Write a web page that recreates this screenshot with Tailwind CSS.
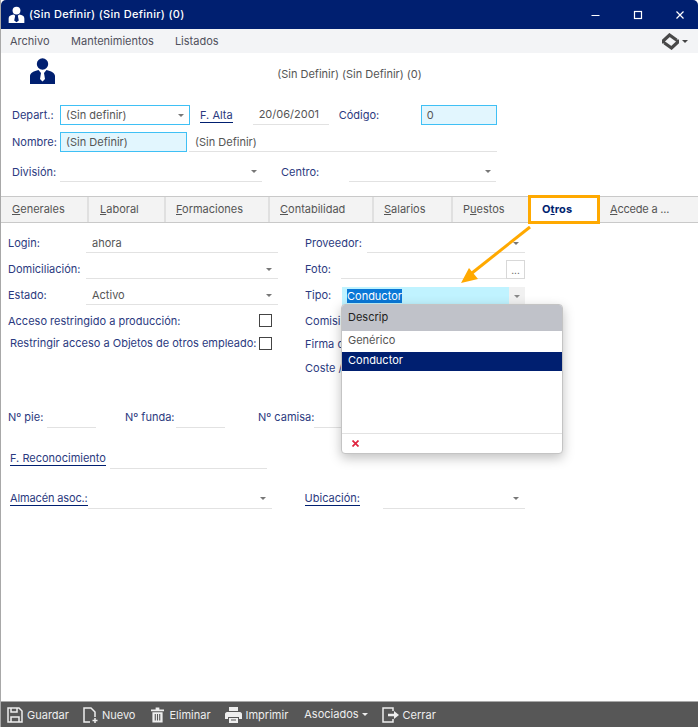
<!DOCTYPE html>
<html lang="es">
  <head>
    <meta charset="UTF-8" />
    <title>(Sin Definir) (Sin Definir) (0)</title>
    <script src="https://cdn.jsdelivr.net/npm/@tailwindcss/browser@4"></script>
  </head>
  <body class="bg-white">
    <div class="relative w-[698px] h-[727px] overflow-hidden bg-white border-l border-[#a8a8a8] font-['Inter','Liberation_Sans',sans-serif] text-[11px] text-[#555] flex flex-col">
      <!-- Barra de titulo -->
      <div class="h-[29px] shrink-0 bg-[#001f70] rounded-tl-[5px] rounded-tr-[5px] flex items-center text-white">
        <svg class="ml-[7px] w-[17px] h-[17px]" viewBox="0 0 26 26" fill="#fff">
          <circle cx="13" cy="7" r="6" />
          <path d="M1 26v-7c0-4 3-5 8-6l2 2-1.500 7 3.500 3 3.500-3-1.500-7 2-2c5 1 8 2 8 6v7z" />
        </svg>
        <span class="ml-[4px] font-medium tracking-[0.3px]">(Sin Definir) (Sin Definir) (0)</span>
        <svg class="ml-auto mr-[7px] w-[100px] h-[12px]" viewBox="0 0 100 12" fill="none" stroke="#fff" stroke-width="1">
          <path d="M0.500 6.500h8" />
          <rect x="43.500" y="2.500" width="7" height="7" stroke-width="1.200" />
          <path d="M85.500 2.500l7 7M92.500 2.500l-7 7" stroke-width="1.200" />
        </svg>
      </div>

      <!-- Menu -->
      <div class="h-[24px] shrink-0 bg-[#f3f4f6] flex items-center pl-[9px] text-[#50505c]">
        <span class="mr-[21.500px]">Archivo</span>
        <span class="mr-[21px]">Mantenimientos</span>
        <span>Listados</span>
        <div class="ml-auto mr-[10px] flex items-center gap-[3px]">
          <svg class="w-[17px] h-[17px]" viewBox="0 0 17 17" fill="none" stroke="#484848" stroke-width="3.200">
            <path d="M1.600 10.500V7.500L7.500 2 14.500 7" />
            <path d="M15.400 6.500v3L9.500 15 2.500 10" />
          </svg>
          <span class="w-0 h-0 border-x-[3px] border-x-transparent border-t-[3px] border-t-[#444]"></span>
        </div>
      </div>

      <!-- Cabecera -->
      <div class="h-[52px] shrink-0 relative flex justify-center pt-[13px]">
        <svg class="absolute left-[28px] top-[5px] w-[27px] h-[26px]" viewBox="0 0 27 26" fill="#001f70">
          <circle cx="13.500" cy="6" r="5.700" />
          <path d="M1 26v-8c0-3 4-5 8.500-6l2.500 3-1 6 2.500 2.500L16 21l-1-6 2.500-3c4.500 1 8.500 3 8.500 6v8z" />
        </svg>
        <span>(Sin Definir) (Sin Definir) (0)</span>
      </div>

      <!-- Datos generales -->
      <div class="h-[91px] shrink-0 pl-[11px]">
        <div class="h-[20px] flex items-center">
          <span class="w-[48px] text-[#2b3a80]">Depart.:</span>
          <div class="w-[130px] h-[20px] border border-[#3fc0f5] flex items-center pl-[5px] pr-[5px]">
            <span>(Sin definir)</span>
            <span class="ml-auto w-0 h-0 border-x-[3px] border-x-transparent border-t-[3px] border-t-[#777]"></span>
          </div>
          <span class="ml-[10px] text-[#2b3a80] border-b border-[#001f70] leading-[14px]">F. Alta</span>
          <div class="ml-[20px] w-[76px] h-[20px] border-b border-[#e2e2e2] flex items-center pl-[6px]">20/06/2001</div>
          <span class="ml-[10px] w-[82px] text-[#2b3a80]">Código:</span>
          <div class="w-[76px] h-[20px] border border-[#3fc0f5] bg-[#e2f6fe] flex items-center pl-[5px]">0</div>
        </div>
        <div class="h-[20px] mt-[7px] flex items-center">
          <span class="w-[48px] text-[#2b3a80]">Nombre:</span>
          <div class="w-[127px] h-[20px] border border-[#3fc0f5] bg-[#e2f6fe] flex items-center pl-[5px]">(Sin Definir)</div>
          <div class="ml-[2px] w-[308px] h-[20px] border-b border-[#e2e2e2] flex items-center pl-[6px] pt-[2px]">(Sin Definir)</div>
        </div>
        <div class="h-[20px] mt-[10px] flex items-center">
          <span class="w-[48px] text-[#2b3a80]">División:</span>
          <div class="w-[202px] h-[20px] border-b border-[#e2e2e2] flex items-center pr-[5px]">
            <span class="ml-auto w-0 h-0 border-x-[3px] border-x-transparent border-t-[3px] border-t-[#777]"></span>
          </div>
          <span class="ml-[19px] w-[68px] text-[#2b3a80]">Centro:</span>
          <div class="w-[147px] h-[20px] border-b border-[#e2e2e2] flex items-center pr-[5px]">
            <span class="ml-auto w-0 h-0 border-x-[3px] border-x-transparent border-t-[3px] border-t-[#777]"></span>
          </div>
        </div>
      </div>

      <!-- Pestanas -->
      <div class="h-[27px] shrink-0 flex border-y border-[#c9c9c9] bg-[#f3f3f3] text-[#555]">
        <div class="w-[88px] border-r-2 border-[#e0e0e0] pl-[11px] leading-[25px]"><u>G</u>enerales</div>
        <div class="w-[77px] border-r-2 border-[#e0e0e0] pl-[11px] leading-[25px]"><u>L</u>aboral</div>
        <div class="w-[104px] border-r-2 border-[#e0e0e0] pl-[10px] leading-[25px]"><u>F</u>ormaciones</div>
        <div class="w-[104px] border-r-2 border-[#e0e0e0] pl-[10px] leading-[25px]"><u>C</u>ontabilidad</div>
        <div class="w-[79px] border-r-2 border-[#e0e0e0] pl-[10px] leading-[25px]"><u>S</u>alarios</div>
        <div class="w-[75px] pl-[10px] leading-[25px]">P<u>u</u>estos</div>
        <div class="relative w-[72px] h-[29px] -mt-[2px] bg-white border-[3px] border-[#ffa900] pl-[11px] leading-[23px] font-bold tracking-[0.1px] text-[#001f70]">O<u>t</u>ros</div>
        <div class="pl-[10px] leading-[25px] tracking-[-0.2px]"><u>A</u>ccede a ...</div>
      </div>

      <!-- Contenido Otros -->
      <div class="flex-1 flex flex-col pl-[7px] pt-[8px]">
        <div class="flex">
          <div class="w-[297px] shrink-0">
            <div class="h-[26px] w-[270px] flex items-start">
              <span class="w-[78px] h-[21px] leading-[25px] text-[#2b3a80]">Login:</span>
              <div class="flex-1 h-[22px] border-b border-[#e2e2e2] pl-[6px] leading-[25px]">ahora</div>
            </div>
            <div class="h-[26px] w-[270px] flex items-start">
              <span class="w-[78px] leading-[25px] text-[#2b3a80]">Domiciliación:</span>
              <div class="flex-1 h-[22px] border-b border-[#e2e2e2] flex items-center pr-[6px]">
                <span class="ml-auto mt-[3px] w-0 h-0 border-x-[3px] border-x-transparent border-t-[3px] border-t-[#777]"></span>
              </div>
            </div>
            <div class="h-[26px] w-[270px] flex items-start">
              <span class="w-[78px] leading-[25px] text-[#2b3a80]">Estado:</span>
              <div class="flex-1 h-[22px] border-b border-[#e2e2e2] flex items-center pl-[6px] pr-[6px]">
                <span class="mt-[3px]">Activo</span>
                <span class="ml-auto mt-[3px] w-0 h-0 border-x-[3px] border-x-transparent border-t-[3px] border-t-[#777]"></span>
              </div>
            </div>
            <div class="h-[23px] w-[264px] flex items-center">
              <span class="mt-[2px] text-[#2b3a80]">Acceso restringido a producción:</span>
              <span class="ml-auto w-[13px] h-[13px] border border-[#444]"></span>
            </div>
            <div class="h-[23px] w-[264px] flex items-center pl-[2px]">
              <span class="w-[247px] overflow-hidden whitespace-nowrap text-[#2b3a80]">Restringir acceso a Objetos de otros empleado:</span>
              <span class="ml-auto w-[13px] h-[13px] border border-[#444]"></span>
            </div>
          </div>
          <div class="w-[220px]">
            <div class="h-[26px] flex items-start">
              <span class="w-[62px] leading-[25px] text-[#2b3a80]">Proveedor:</span>
              <div class="flex-1 h-[22px] border-b border-[#e2e2e2] flex items-center pr-[6px]">
                <span class="ml-auto mt-[3px] w-0 h-0 border-x-[3px] border-x-transparent border-t-[3px] border-t-[#777]"></span>
              </div>
            </div>
            <div class="h-[26px] flex items-start">
              <span class="w-[36px] leading-[25px] text-[#2b3a80]">Foto:</span>
              <div class="w-[165px] h-[22px] border-b border-[#e2e2e2]"></div>
              <div class="w-[19px] h-[19px] mt-[3px] border border-[#d8d8d8] flex items-center justify-center text-[10px] leading-none">...</div>
            </div>
            <div class="h-[26px] flex items-start">
              <span class="w-[37px] leading-[25px] text-[#2b3a80]">Tipo:</span>
              <div class="flex-1 mt-[4px] h-[18px] bg-[#c0f3ff] flex items-center pl-[5px]">
                <span class="bg-[#0a78d7] text-white leading-[14px]">Conductor</span>
                <span class="ml-auto w-[16px] h-[18px] bg-[#f1f1f1] flex items-center justify-center">
                  <span class="w-0 h-0 border-x-[3px] border-x-transparent border-t-[3px] border-t-[#888]"></span>
                </span>
              </div>
            </div>
            <div class="h-[24px] flex items-center text-[#2b3a80]">Comisi</div>
            <div class="h-[23px] flex items-center text-[#2b3a80]">Firma d</div>
            <div class="h-[25px] flex items-center text-[#2b3a80]">Coste /</div>
          </div>
        </div>

        <div class="mt-[25px] h-[22px] flex items-center text-[#2b3a80] whitespace-nowrap">
          <span class="w-[39px]">Nº pie:</span>
          <div class="w-[49px] h-[22px] border-b border-[#e2e2e2]"></div>
          <span class="ml-[29px] w-[51px]">Nº funda:</span>
          <div class="w-[49px] h-[22px] border-b border-[#e2e2e2]"></div>
          <span class="ml-[33px] w-[56px]">Nº camisa:</span>
          <div class="w-[40px] h-[22px] border-b border-[#e2e2e2]"></div>
        </div>

        <div class="mt-[18px] h-[23px] flex items-center pl-[2px]">
          <span class="mt-[2px] text-[#2b3a80] border-b border-[#001f70] leading-[14px]">F. Reconocimiento</span>
          <div class="ml-[4px] w-[157px] h-[23px] border-b border-[#e2e2e2]"></div>
        </div>

        <div class="mt-[17px] h-[23px] flex items-center">
          <span class="ml-[2px] mt-[2px] tracking-[-0.14px] text-[#2b3a80] border-b border-[#001f70] leading-[14px]">Almacén asoc.:</span>
          <div class="w-[184px] h-[23px] border-b border-[#e2e2e2] flex items-center pr-[6px]">
            <span class="ml-auto mt-[3px] w-0 h-0 border-x-[3px] border-x-transparent border-t-[3px] border-t-[#777]"></span>
          </div>
          <span class="ml-[33px] mt-[2px] text-[#2b3a80] border-b border-[#001f70] leading-[14px]">Ubicación:</span>
          <div class="ml-[23px] w-[142px] h-[23px] border-b border-[#e2e2e2] flex items-center pr-[6px]">
            <span class="ml-auto mt-[3px] w-0 h-0 border-x-[3px] border-x-transparent border-t-[3px] border-t-[#777]"></span>
          </div>
        </div>
      </div>

      <!-- Barra inferior -->
      <div class="h-[26px] shrink-0 bg-[#575757] border-t border-[#a9a9a9] flex items-center text-[#eee] pl-[6px]">
        <svg class="w-[16px] h-[16px]" viewBox="0 0 16 16" fill="none" stroke="#eee" stroke-width="1.500">
          <path d="M1 1h11l3 3v11H1z" />
          <path d="M4 1v4h6V1M4 15v-5h8v5" />
        </svg>
        <span class="ml-[4px] mt-[2px]">Guardar</span>
        <svg class="ml-[13px] w-[16px] h-[16px]" viewBox="0 0 16 16" fill="none" stroke="#eee" stroke-width="1.500">
          <path d="M8 15H2V1h7l4 4v5" />
          <path d="M13 11v5M10.500 13.500h5" />
        </svg>
        <span class="ml-[4px] mt-[2px]">Nuevo</span>
        <svg class="ml-[16px] w-[13px] h-[16px]" viewBox="0 0 14 16" fill="#eee">
          <path d="M0 2h5V0h4v2h5v2H0zM1.500 5h11v11h-11z" />
          <path d="M4 7h1.200v7H4zM6.400 7h1.200v7H6.400zM8.800 7H10v7H8.800z" fill="#575757" />
        </svg>
        <span class="ml-[5px] mt-[2px]">Eliminar</span>
        <svg class="ml-[14px] w-[17px] h-[16px]" viewBox="0 0 17 16" fill="#eee">
          <path d="M4 0h9v4H4zM2 5h13c1 0 2 1 2 2v5h-3v-2H3v2H0V7c0-1 1-2 2-2z" />
          <path d="M4 11h9v5H4z" />
          <path d="M6 13h5" stroke="#575757" />
        </svg>
        <span class="ml-[4px] mt-[2px]">Imprimir</span>
        <span class="ml-[16px]">Asociados</span>
        <span class="ml-[3px] w-0 h-0 border-x-[3px] border-x-transparent border-t-[3px] border-t-[#eee]"></span>
        <svg class="ml-[14px] w-[18px] h-[16px]" viewBox="0 0 18 16" fill="none" stroke="#eee" stroke-width="1.500">
          <path d="M11 4V1H1v14h10v-3" />
          <path d="M6 8h7" stroke-width="2.500" />
          <path d="M12 4l5 4-5 4z" fill="#eee" stroke="none" />
        </svg>
        <span class="ml-[3px] mt-[2px]">Cerrar</span>
      </div>

      <!-- Desplegable de Tipo -->
      <div class="absolute left-[340px] top-[304px] w-[222px] h-[150px] bg-white border border-[#c4c4c4] rounded-[4px] shadow-[0_4px_12px_rgba(0,0,0,0.25)] flex flex-col overflow-hidden">
        <div class="h-[26px] shrink-0 bg-[#c0c2c9] flex items-center pl-[6px] pb-[2px] text-[#222]">Descrip</div>
        <div class="h-[20px] mt-[1px] flex items-center pl-[6px] pb-[4px]">Genérico</div>
        <div class="h-[19px] bg-[#001f70] flex items-center pl-[6px] pb-[2px] text-white">Conductor</div>
        <div class="mt-auto h-[20px] border-t border-[#e2e2e2] flex items-center pl-[10px]">
          <svg class="w-[7px] h-[7px]" viewBox="0 0 7 7" stroke="#e0243f" stroke-width="1.700"><path d="M0.500 0.500l6 6M6.500 0.500l-6 6" /></svg>
        </div>
      </div>

      <!-- Flecha de la anotacion -->
      <svg class="absolute left-[440px] top-[220px] w-[100px] h-[70px]" viewBox="0 0 100 70" fill="#ffa900">
        <path d="M89 7L31 53" stroke="#ffa900" stroke-width="3" />
        <path d="M20 63l8-15 9 11z" />
      </svg>
    </div>
  </body>
</html>
